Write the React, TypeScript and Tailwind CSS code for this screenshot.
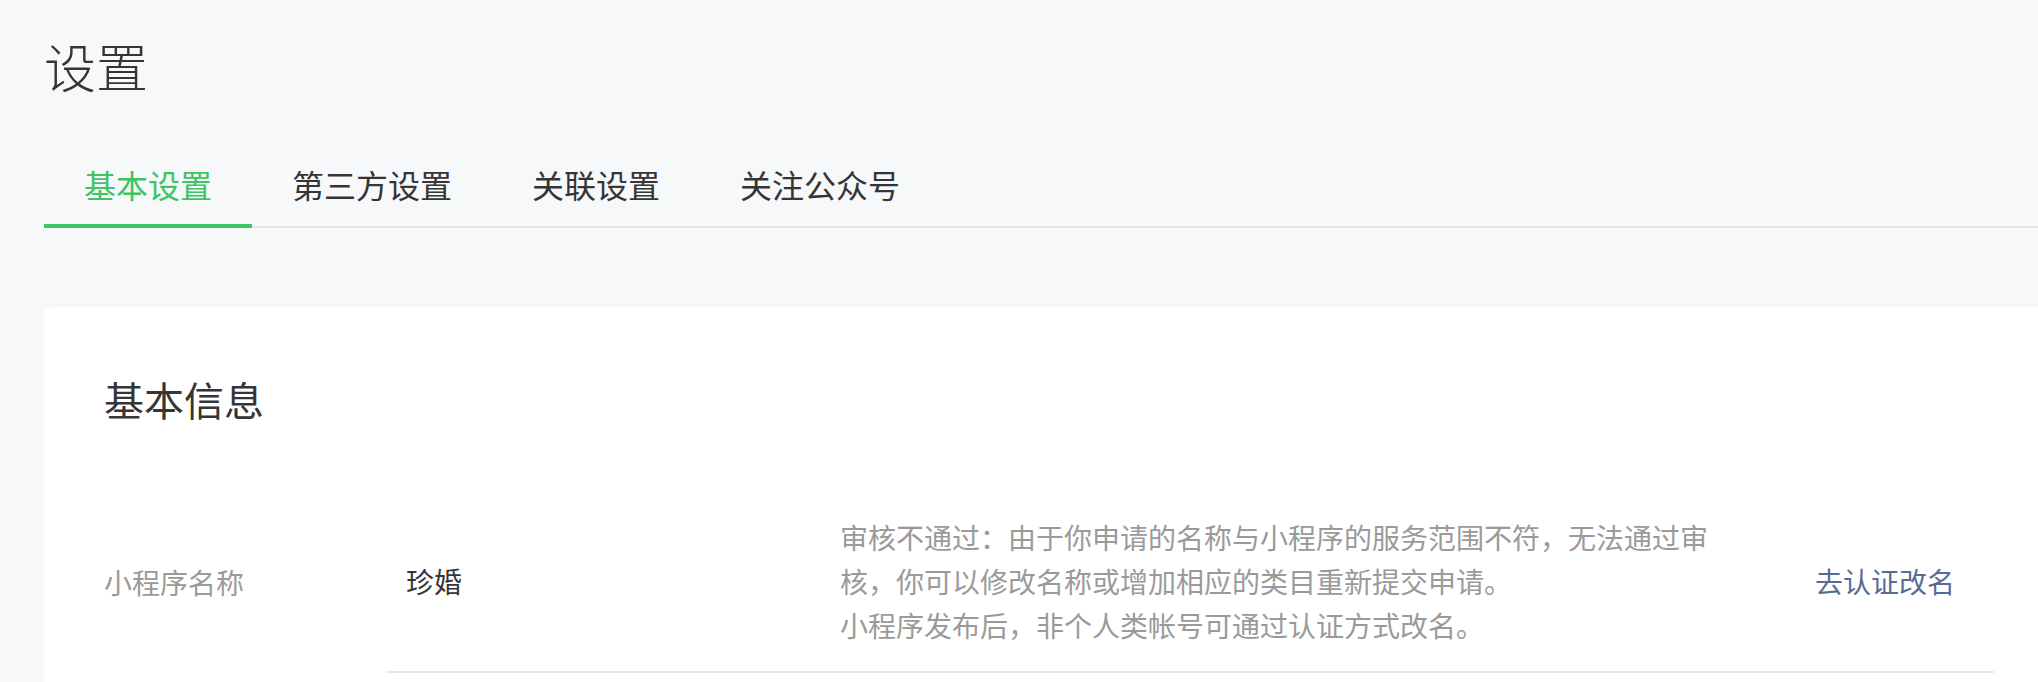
import React from "react";

const tabs = ["基本设置", "第三方设置", "关联设置", "关注公众号"];

export default function App() {
  return (
    <div
      className="h-screen w-full overflow-hidden bg-[#f7f8fa] pl-[44px] text-[#353535]"
      style={{ fontFamily: '"Noto Sans CJK SC", "Noto Sans", sans-serif' }}
    >
      {/* Page title */}
      <h1 className="pt-[40px] text-[52px] leading-[52px] font-light">设置</h1>

      {/* Tabs */}
      <div className="mt-[76px] flex w-[2010px] border-b-2 border-[#e3e4e7]">
        {tabs.map((tab, i) => (
          <div
            key={tab}
            className={
              i === 0
                ? "-mb-[2px] border-b-4 border-[#3ec462] px-[40px] pb-[24px] text-[32px] leading-[32px] text-[#3ec462]"
                : "px-[40px] pb-[24px] text-[32px] leading-[32px]"
            }
          >
            {tab}
          </div>
        ))}
      </div>

      {/* Card */}
      <div className="mt-[79px] h-[600px] w-[2010px] rounded-lg bg-white pt-[72px] pl-[60px] pr-[60px]">
        <h2 className="text-[40px] leading-[40px] font-normal">基本信息</h2>

        <div className="mt-[71px] flex items-stretch">
          <div className="flex w-[282px] shrink-0 items-center text-[28px] leading-[44px] text-[#9a9a9a]">
            小程序名称
          </div>
          <div className="flex flex-1 items-center border-b-2 border-[#e7e7eb] pt-[25px] pb-[24px]">
            <div className="w-[454px] shrink-0 pl-[20px] text-[28px] leading-[44px]">珍婚</div>
            <div className="w-[880px] shrink-0 text-[28px] leading-[44px] text-[#9a9a9a]">
              <p>
                审核不通过：由于你申请的名称与小程序的服务范围不符，无法通过审核，你可以修改名称或增加相应的类目重新提交申请。
              </p>
              <p>小程序发布后，非个人类帐号可通过认证方式改名。</p>
            </div>
            <a className="ml-[95px] cursor-pointer text-[28px] leading-[44px] text-[#576b95]">去认证改名</a>
          </div>
        </div>
      </div>
    </div>
  );
}
